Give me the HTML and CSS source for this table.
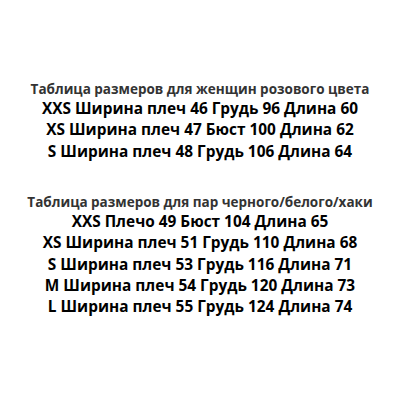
FILE: index.html
```html
<!DOCTYPE html>
<html lang="ru">
<head>
<meta charset="utf-8">
<link rel="stylesheet" href="styles.css">
</head>
<body>
<main class="page">
  <section class="group">
    <h2 class="title">Таблица размеров для женщин розового цвета</h2>
    <p class="row">XXS Ширина плеч 46 Грудь 96 Длина 60</p>
    <p class="row">XS Ширина плеч 47 Бюст 100 Длина 62</p>
    <p class="row">S Ширина плеч 48 Грудь 106 Длина 64</p>
  </section>
  <section class="group">
    <h2 class="title">Таблица размеров для пар черного/белого/хаки</h2>
    <p class="row">XXS Плечо 49 Бюст 104 Длина 65</p>
    <p class="row">XS Ширина плеч 51 Грудь 110 Длина 68</p>
    <p class="row">S Ширина плеч 53 Грудь 116 Длина 71</p>
    <p class="row">M Ширина плеч 54 Грудь 120 Длина 73</p>
    <p class="row">L Ширина плеч 55 Грудь 124 Длина 74</p>
  </section>
</main>
</body>
</html>
```

FILE: styles.css
```css
html, body {
  margin: 0;
  padding: 0;
  background: #ffffff;
}
.page {
  width: 400px;
  height: 400px;
  box-sizing: border-box;
  padding-top: 80px;
  display: flex;
  flex-direction: column;
  gap: 31.2px;
  font-family: "Open Sans", "DejaVu Sans", sans-serif;
  font-weight: 700;
}
.group {
  display: flex;
  flex-direction: column;
  align-items: center;
}
.title {
  margin: 0;
  font-size: 13.5px;
  line-height: 18px;
  font-weight: 700;
  color: #333333;
  white-space: nowrap;
}
.row {
  margin: 0;
  font-size: 15.4px;
  line-height: 21.3px;
  color: #000000;
  white-space: nowrap;
}
```
